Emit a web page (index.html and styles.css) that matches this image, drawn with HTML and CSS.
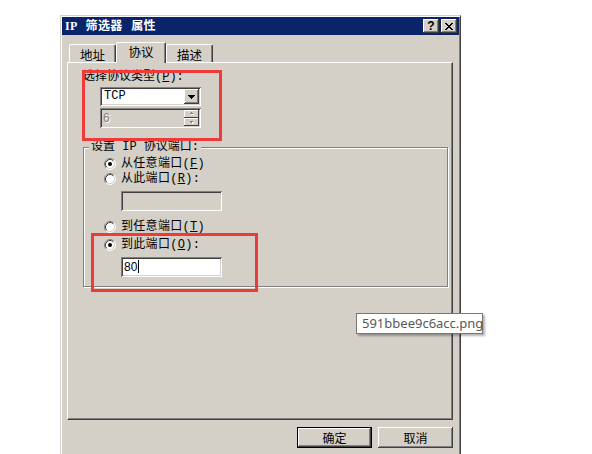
FILE: index.html
```html
<!DOCTYPE html>
<html lang="zh-CN">
<head>
<meta charset="utf-8">
<title>IP 筛选器 属性</title>
<link rel="stylesheet" href="styles.css">
</head>
<body>
<div class="dialog">
  <div class="titlebar">
    <span class="title">IP 筛选器 属性</span>
    <div class="capbtns">
      <span class="cbtn help">?</span>
      <span class="cbtn">
        <svg width="8" height="7" viewBox="0 0 8 7" shape-rendering="crispEdges"><g fill="#000"><rect x="0" y="0" width="2" height="1"/><rect x="6" y="0" width="2" height="1"/><rect x="1" y="1" width="2" height="1"/><rect x="5" y="1" width="2" height="1"/><rect x="2" y="2" width="4" height="1"/><rect x="3" y="3" width="2" height="1"/><rect x="2" y="4" width="4" height="1"/><rect x="1" y="5" width="2" height="1"/><rect x="5" y="5" width="2" height="1"/><rect x="0" y="6" width="2" height="1"/><rect x="6" y="6" width="2" height="1"/></g></svg>
      </span>
    </div>
  </div>
  <div class="content">
    <div class="tabs">
      <div class="tab">地址</div>
      <div class="tab active">协议</div>
      <div class="tab">描述</div>
    </div>
    <div class="panel">
      <div class="label">选择协议类型(<u>P</u>):</div>
      <div class="combo">
        <span class="combo-text">TCP</span>
        <span class="dropbtn">
          <svg width="15" height="15" viewBox="0 0 15 15" shape-rendering="crispEdges"><g fill="#000"><rect x="4" y="6" width="7" height="1"/><rect x="5" y="7" width="5" height="1"/><rect x="6" y="8" width="3" height="1"/><rect x="7" y="9" width="1" height="1"/></g></svg>
        </span>
      </div>
      <div class="spinner">
        <span class="spin-text">6</span>
        <span class="spinbtns">
          <span class="spinbtn"><svg width="15" height="8" viewBox="0 0 15 8" shape-rendering="crispEdges"><g fill="#fff"><rect x="8" y="3" width="1" height="1"/><rect x="7" y="4" width="3" height="1"/></g><g fill="#808080"><rect x="7" y="2" width="1" height="1"/><rect x="6" y="3" width="3" height="1"/></g></svg></span>
          <span class="spinbtn"><svg width="15" height="8" viewBox="0 0 15 8" shape-rendering="crispEdges"><g fill="#fff"><rect x="7" y="4" width="3" height="1"/><rect x="8" y="5" width="1" height="1"/></g><g fill="#808080"><rect x="6" y="3" width="3" height="1"/><rect x="7" y="4" width="1" height="1"/></g></svg></span>
        </span>
      </div>
      <fieldset class="group">
        <legend>设置 IP 协议端口:</legend>
        <div class="radio r1">
          <svg class="rb" width="12" height="12" viewBox="0 0 12 12"><circle cx="6" cy="6" r="5" fill="#fff"/><path d="M2.11 9.89 A5.5 5.5 0 0 1 9.89 2.11" fill="none" stroke="#808080"/><path d="M9.89 2.11 A5.5 5.5 0 0 1 2.11 9.89" fill="none" stroke="#fff"/><path d="M2.82 9.18 A4.5 4.5 0 0 1 9.18 2.82" fill="none" stroke="#404040"/><path d="M9.18 2.82 A4.5 4.5 0 0 1 2.82 9.18" fill="none" stroke="#d4d0c8"/><circle cx="6" cy="6" r="2" fill="#000"/></svg>
          <span>从任意端口(<u>F</u>)</span>
        </div>
        <div class="radio r2">
          <svg class="rb" width="12" height="12" viewBox="0 0 12 12"><circle cx="6" cy="6" r="5" fill="#fff"/><path d="M2.11 9.89 A5.5 5.5 0 0 1 9.89 2.11" fill="none" stroke="#808080"/><path d="M9.89 2.11 A5.5 5.5 0 0 1 2.11 9.89" fill="none" stroke="#fff"/><path d="M2.82 9.18 A4.5 4.5 0 0 1 9.18 2.82" fill="none" stroke="#404040"/><path d="M9.18 2.82 A4.5 4.5 0 0 1 2.82 9.18" fill="none" stroke="#d4d0c8"/></svg>
          <span>从此端口(<u>R</u>):</span>
        </div>
        <div class="field disabled"></div>
        <div class="radio r3">
          <svg class="rb" width="12" height="12" viewBox="0 0 12 12"><circle cx="6" cy="6" r="5" fill="#fff"/><path d="M2.11 9.89 A5.5 5.5 0 0 1 9.89 2.11" fill="none" stroke="#808080"/><path d="M9.89 2.11 A5.5 5.5 0 0 1 2.11 9.89" fill="none" stroke="#fff"/><path d="M2.82 9.18 A4.5 4.5 0 0 1 9.18 2.82" fill="none" stroke="#404040"/><path d="M9.18 2.82 A4.5 4.5 0 0 1 2.82 9.18" fill="none" stroke="#d4d0c8"/></svg>
          <span>到任意端口(<u>T</u>)</span>
        </div>
        <div class="radio r4">
          <svg class="rb" width="12" height="12" viewBox="0 0 12 12"><circle cx="6" cy="6" r="5" fill="#fff"/><path d="M2.11 9.89 A5.5 5.5 0 0 1 9.89 2.11" fill="none" stroke="#808080"/><path d="M9.89 2.11 A5.5 5.5 0 0 1 2.11 9.89" fill="none" stroke="#fff"/><path d="M2.82 9.18 A4.5 4.5 0 0 1 9.18 2.82" fill="none" stroke="#404040"/><path d="M9.18 2.82 A4.5 4.5 0 0 1 2.82 9.18" fill="none" stroke="#d4d0c8"/><circle cx="6" cy="6" r="2" fill="#000"/></svg>
          <span>到此端口(<u>O</u>):</span>
        </div>
        <div class="field active"><span class="val">80</span><span class="caret"></span></div>
      </fieldset>
    </div>
    <div class="buttons">
      <button class="btn default">确定</button>
      <button class="btn">取消</button>
    </div>
  </div>
</div>
<div class="redbox box1"></div>
<div class="redbox box2"></div>
<div class="tooltip">591bbee9c6acc.png</div>
</body>
</html>
```
FILE: styles.css
```css
html, body {
  margin: 0;
  height: 100%;
  overflow: hidden;
  background: #fff;
}
body {
  position: relative;
  font-family: "Liberation Mono", "Noto Sans CJK SC", monospace;
  font-size: 12px;
  line-height: 13px;
  color: #000;
}
u { text-decoration: underline; text-underline-offset: 1px; }

.dialog {
  box-sizing: border-box;
  width: 401px;
  height: 450px;
  margin: 15px 0 0 60px;
  background: #d4d0c8;
  border: 1px solid;
  border-color: #d4d0c8 #404040 #404040 #d4d0c8;
  padding: 1px;
  box-shadow: inset 1px 1px #fff, inset -1px -1px #808080;
}

.titlebar {
  height: 18px;
  background: #0a246a;
  display: flex;
  align-items: center;
  padding: 0 2px 0 3px;
}
.title {
  flex: 1;
  color: #fff;
  font-weight: bold;
  font-family: "Liberation Serif", "Noto Sans CJK SC", serif;
  font-size: 12px;
  letter-spacing: 0.4px;
  word-spacing: 5px;
}
.capbtns { display: flex; gap: 2px; }
.cbtn {
  box-sizing: border-box;
  width: 16px;
  height: 14px;
  background: #d4d0c8;
  box-shadow: inset -1px -1px #404040, inset 1px 1px #fff, inset -2px -2px #808080;
  display: flex;
  align-items: center;
  justify-content: center;
}
.cbtn.help {
  font-family: "Liberation Sans", sans-serif;
  font-weight: bold;
  font-size: 12px;
  line-height: 12px;
  padding-bottom: 1px;
}

.content { padding: 7px 5px 0 5px; }

.tabs {
  display: flex;
  align-items: flex-end;
  height: 20px;
  padding-left: 2px;
}
.tab {
  box-sizing: border-box;
  width: 47px;
  height: 18px;
  border-top: 1px solid #fff;
  border-left: 1px solid #fff;
  border-right: 1px solid #404040;
  border-radius: 2px 2px 0 0;
  box-shadow: inset -1px 0 #808080;
  font-family: "Noto Sans CJK SC", sans-serif;
  font-size: 12.5px;
  text-align: center;
  padding-top: 3px;
}
.tab.active {
  width: 50px;
  height: 21px;
  margin-bottom: -1px;
  position: relative;
  z-index: 1;
  background: #d4d0c8;
  padding-top: 2px;
}

.panel {
  box-sizing: border-box;
  width: 386px;
  height: 358px;
  border: 1px solid;
  border-color: #fff #404040 #404040 #fff;
  box-shadow: inset -1px -1px #808080;
  padding: 8px 0 0 15px;
}
.label { height: 13px; }

.combo {
  box-sizing: border-box;
  width: 101px;
  height: 19px;
  margin: 3px 0 0 17px;
  padding: 2px;
  background: #fff;
  box-shadow: inset 1px 1px #808080, inset -1px -1px #fff, inset 2px 2px #404040, inset -2px -2px #d4d0c8;
  display: flex;
  align-items: center;
}
.combo-text { flex: 1; padding-left: 2px; font-size: 12px; }
.dropbtn {
  width: 15px;
  height: 15px;
  background: #d4d0c8;
  box-shadow: inset -1px -1px #404040, inset 1px 1px #fff, inset -2px -2px #808080;
  display: flex;
}

.spinner {
  box-sizing: border-box;
  width: 101px;
  height: 20px;
  margin: 2px 0 0 17px;
  padding: 2px;
  background: #d4d0c8;
  box-shadow: inset 1px 1px #808080, inset -1px -1px #fff, inset 2px 2px #404040, inset -2px -2px #d4d0c8;
  display: flex;
  align-items: center;
}
.spin-text {
  flex: 1;
  padding-left: 1px;
  font-family: "Liberation Sans", sans-serif;
  color: #808080;
  text-shadow: 1px 1px #fff;
}
.spinbtns { display: flex; flex-direction: column; width: 15px; height: 16px; }
.spinbtn {
  height: 8px;
  background: #d4d0c8;
  box-shadow: inset -1px -1px #404040, inset 1px 1px #fff;
  display: flex;
}

.group {
  box-sizing: border-box;
  width: 365px;
  margin: 13px 0 0 0;
  padding: 0 0 9px 0;
  border: 1px solid #808080;
  box-shadow: 1px 1px 0 #fff, inset 1px 1px 0 #fff;
  min-inline-size: 0;
}
.group legend {
  margin-left: 5px;
  padding: 0 2px;
  line-height: 13px;
  background: #d4d0c8;
}
.radio {
  display: flex;
  align-items: center;
  gap: 5px;
  height: 14px;
  padding-left: 20px;
  letter-spacing: 0.3px;
}
.radio .rb { flex: none; }
.r1 { margin-top: 3px; }
.r2 { margin-top: 1px; }
.r3 { margin-top: 9px; }
.r4 { margin-top: 4px; }

.field {
  box-sizing: border-box;
  width: 101px;
  height: 20px;
  margin: 5px 0 0 37px;
  padding: 3px 3px 0 3px;
  box-shadow: inset 1px 1px #808080, inset -1px -1px #fff, inset 2px 2px #404040, inset -2px -2px #d4d0c8;
  display: flex;
  align-items: flex-start;
}
.field.disabled { background: #d4d0c8; }
.field.active { background: #fff; }
.val {
  font-family: "Liberation Sans", sans-serif;
  font-size: 12px;
  line-height: 14px;
}
.caret {
  width: 1px;
  height: 13px;
  margin-left: 1px;
  background: #000;
}

.buttons {
  display: flex;
  justify-content: flex-end;
  gap: 6px;
  width: 386px;
  margin-top: 7px;
}
.btn {
  box-sizing: border-box;
  width: 75px;
  height: 21px;
  padding: 0;
  border: none;
  background: #d4d0c8;
  font-family: "Noto Sans CJK SC", sans-serif;
  font-size: 12px;
  color: #000;
  box-shadow: inset -1px -1px #404040, inset 1px 1px #fff, inset -2px -2px #808080, inset 2px 2px #d4d0c8;
}
.btn.default {
  box-shadow: inset 0 0 0 1px #000, inset -2px -2px #404040, inset 2px 2px #fff, inset -3px -3px #808080, inset 3px 3px #d4d0c8;
}

.redbox {
  position: absolute;
  box-sizing: border-box;
  border: 3px solid #f03a3a;
}
.box1 { left: 82px; top: 70px; width: 140px; height: 71px; }
.box2 { left: 91px; top: 233px; width: 167px; height: 59px; }

.tooltip {
  position: absolute;
  left: 356px;
  top: 313px;
  box-sizing: border-box;
  width: 127px;
  height: 21px;
  padding-left: 5px;
  background: #fff;
  border: 1px solid #767676;
  box-shadow: 2px 2px 2px rgba(0, 0, 0, 0.3);
  font-family: "Noto Sans", sans-serif;
  font-size: 13px;
  line-height: 18px;
  color: #575757;
}
```
